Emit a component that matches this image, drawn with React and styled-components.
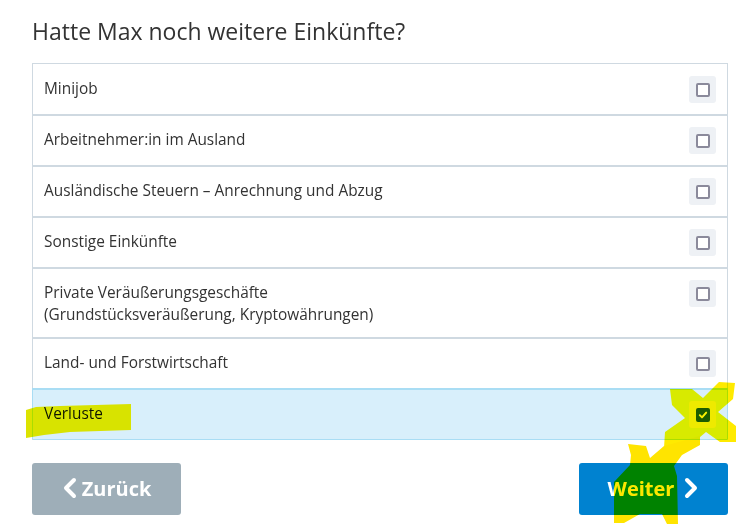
import React, { useState } from 'react'
import styled, { createGlobalStyle } from 'styled-components'

const GlobalStyle = createGlobalStyle`
  html, body {
    margin: 0;
    padding: 0;
    background: #fff;
  }
  body {
    font-family: "Open Sans", "Liberation Sans", sans-serif;
    color: #333;
  }
`

const Page = styled.div`
  position: relative;
  width: 738px;
  height: 524px;
  box-sizing: border-box;
  padding: 16px 10px 0 32px;
  overflow: hidden;
`

const Title = styled.h1`
  margin: 0 0 17px;
  font-size: 23px;
  line-height: 30px;
  font-weight: 400;
  color: #333;
`

const List = styled.div`
  display: flex;
  flex-direction: column;
  border: 1px solid #cfd9e1;
`

const Row = styled.label`
  display: flex;
  align-items: flex-start;
  justify-content: space-between;
  gap: 16px;
  padding: ${p => (p.first ? '12px' : '11px')} 11px 11px 11px;
  border-top: ${p => (p.first ? '0' : '2px')} solid ${p => (p.selected ? '#a9ddf4' : '#cfd9e1')};
  background: ${p => (p.selected ? '#d8effb' : '#fff')};
  box-shadow: ${p => (p.selected ? '-1px 0 0 #a9ddf4, 1px 0 0 #a9ddf4, 0 1px 0 #a9ddf4' : 'none')};
  cursor: pointer;
`

const Label = styled.span`
  padding-top: 2px;
  font-size: 15.4px;
  line-height: 22px;
  color: ${p => (p.selected ? '#111' : '#333')};
`

const BoxWrap = styled.span`
  flex: none;
  display: flex;
  align-items: center;
  justify-content: center;
  width: 27px;
  height: 27px;
  border-radius: 3px;
  background: #eef1f5;
`

const Box = styled.span`
  display: flex;
  align-items: center;
  justify-content: center;
  box-sizing: border-box;
  width: 14px;
  height: 14px;
  border-radius: 2px;
  border: 2px solid ${p => (p.checked ? '#1d5c96' : '#8b8a9b')};
  background: ${p => (p.checked ? '#1d5c96' : '#fff')};
`

const Actions = styled.div`
  display: flex;
  justify-content: space-between;
  margin-top: 23px;
`

const Button = styled.button`
  display: flex;
  align-items: center;
  justify-content: center;
  gap: ${p => (p.primary ? '10px' : '5px')};
  width: 149px;
  height: 52px;
  border: 0;
  border-radius: 3px;
  background: ${p => (p.primary ? '#0082d0' : '#9eaeb8')};
  color: #fff;
  font-family: "Open Sans", "Liberation Sans", sans-serif;
  font-weight: 700;
  font-size: 20px;
  cursor: pointer;
  padding: 0 0 2px;
`

const Marker = styled.svg`
  position: absolute;
  left: 0;
  top: 0;
  pointer-events: none;
  mix-blend-mode: darken;
`

const Chevron = ({ dir }) => (
  <svg width="15" height="22" viewBox="0 0 15 22">
    <polyline
      points={dir === 'left' ? '12,3 4,11 12,19' : '3,3 11,11 3,19'}
      fill="none"
      stroke="#fff"
      strokeWidth="4"
      strokeLinecap="round"
      strokeLinejoin="round"
    />
  </svg>
)

const Tick = () => (
  <svg width="10" height="10" viewBox="0 0 10 10">
    <polyline points="1.8,5.2 4,7.4 8.2,2.6" fill="none" stroke="#fff" strokeWidth="1.9" strokeLinecap="round" strokeLinejoin="round" />
  </svg>
)

const options = [
  'Minijob',
  'Arbeitnehmer:in im Ausland',
  'Ausländische Steuern – Anrechnung und Abzug',
  'Sonstige Einkünfte',
  <>Private Veräußerungsgeschäfte<br />(Grundstücksveräußerung, Kryptowährungen)</>,
  'Land- und Forstwirtschaft',
  'Verluste',
]

export default function App() {
  const [checked, setChecked] = useState({ 6: true })

  return (
    <Page>
      <GlobalStyle />
      <Title>Hatte Max noch weitere Einkünfte?</Title>
      <List>
        {options.map((text, i) => (
          <Row
            key={i}
            first={i === 0}
            selected={!!checked[i]}
            onClick={() => setChecked({ ...checked, [i]: !checked[i] })}
          >
            <Label selected={!!checked[i]}>{text}</Label>
            <BoxWrap>
              <Box checked={!!checked[i]}>{checked[i] && <Tick />}</Box>
            </BoxWrap>
          </Row>
        ))}
      </List>
      <Actions>
        <Button>
          <Chevron dir="left" />
          Zurück
        </Button>
        <Button primary>
          Weiter
          <Chevron dir="right" />
        </Button>
      </Actions>

      {/* highlighter marks drawn over the screenshot */}
      <Marker width="738" height="524" viewBox="0 0 738 524">
        <polygon
          fill="#dce300"
          points="26,410 36,407 60,406 131,404 131,430 70,432 44,435 26,438"
        />
        <polygon
          fill="#ffea00"
          points="670,389 692,389 703,398 719,382 735,383 733,399 718,412 736,426 736,442 720,442 706,432 693,443 664,448 665,432 685,418 672,405"
        />
        <polygon
          fill="#ffe400"
          points="628,444 646,446 650,458 664,446 686,440 700,436 700,445 682,455 674,466 677,476 678,524 667,524 662,514 640,514 624,523 614,523 614,482 630,465 631,455"
        />
      </Marker>
    </Page>
  )
}
